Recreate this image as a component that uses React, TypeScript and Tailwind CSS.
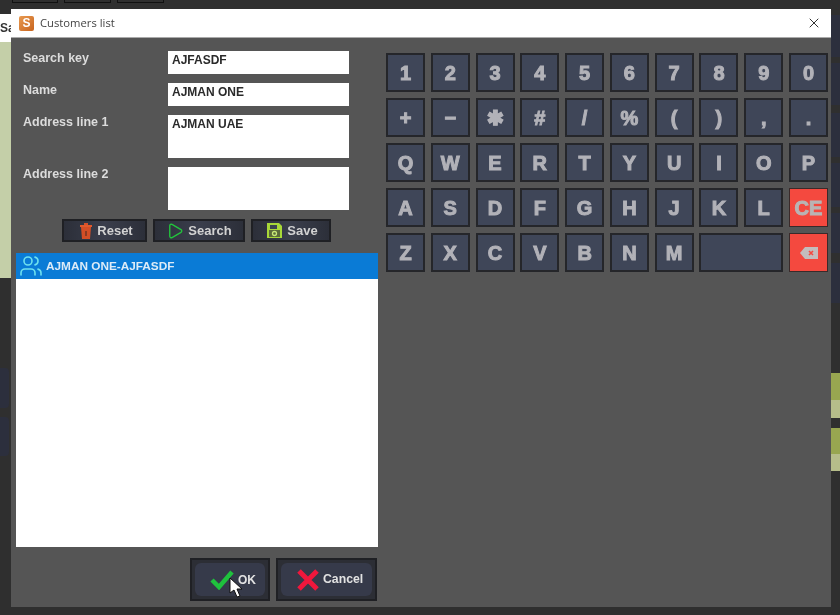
import React from 'react'
import { Play, Users, X } from 'lucide-react'

const rows = [
  ['1', '2', '3', '4', '5', '6', '7', '8', '9', '0'],
  ['+', '−', '✱', '#', '/', '%', '(', ')', ',', '.'],
  ['Q', 'W', 'E', 'R', 'T', 'Y', 'U', 'I', 'O', 'P'],
  ['A', 'S', 'D', 'F', 'G', 'H', 'J', 'K', 'L'],
]
const lastRow = ['Z', 'X', 'C', 'V', 'B', 'N', 'M']

const fields = [
  { label: 'Search key', value: 'AJFASDF', h: 'h-[23px]' },
  { label: 'Name', value: 'AJMAN ONE', h: 'h-[23px]' },
  { label: 'Address line 1', value: 'AJMAN UAE', h: 'h-[43px]' },
  { label: 'Address line 2', value: '', h: 'h-[43px]' },
]

const keyClass =
  'flex items-center justify-center h-[39px] border-2 border-[#25262a] bg-[#3f4658] text-[20px] font-bold text-[#b2b2b8] [-webkit-text-stroke:1px_#b2b2b8]'
const redKeyClass =
  'flex items-center justify-center h-[39px] border border-[#3a2a2a] bg-[#f4493f] text-[20px] font-bold text-[#b9b4b4] [-webkit-text-stroke:1px_#b9b4b4]'
const smallBtn =
  'flex items-center justify-center gap-[4px] h-[23px] border-2 border-[#1f2024] bg-gradient-to-r from-[#2c2f39] via-[#3a3e4c] to-[#2c2f39] text-[13px] font-bold text-[#d2d2d2]'
const bigBtn = 'flex h-[43px] p-[3px] border-2 border-[#1f2024] bg-[#2c2e35]'
const bigBtnInner =
  'flex flex-1 items-center justify-start rounded-md bg-[#363a4a] font-bold text-[#e2e2e2]'

function TrashIcon() {
  return (
    <svg width="14" height="18" viewBox="0 0 14 18">
      <path d="M5 1h4v2H5z" fill="#d8512a" />
      <path d="M1 3h12v2H1z" fill="#e25a2c" />
      <path d="M2 5h10l-1 12H3z" fill="#d44e26" />
      <path d="M6 9h2v5H6z" fill="#8c3a22" />
    </svg>
  )
}

function SaveIcon() {
  return (
    <svg width="17" height="17" viewBox="0 0 17 17">
      <path d="M1 1h12l3 3v12H1z" fill="#a8d838" />
      <path d="M4 3h7v4H4z" fill="#3c4450" />
      <path d="M3 8h11v7H3z" fill="#5c6a3a" />
      <circle cx="8.5" cy="11.5" r="2" fill="none" stroke="#c8e878" strokeWidth="1.3" />
    </svg>
  )
}

function BackspaceIcon() {
  return (
    <svg width="20" height="14" viewBox="0 0 20 14">
      <path d="M6 1h13v12H6L1 7z" fill="#c4bcbc" />
      <path d="M10 5l4 4M14 5l-4 4" stroke="#f4493f" strokeWidth="1.6" />
    </svg>
  )
}

function CheckIcon() {
  return (
    <svg width="24" height="21" viewBox="0 0 24 21">
      <path d="M2 11l7 7L22 3" fill="none" stroke="#1fc13d" strokeWidth="4.5" />
    </svg>
  )
}

function CrossIcon() {
  return (
    <svg width="24" height="24" viewBox="0 0 24 24">
      <path d="M3 3l18 18M21 3L3 21" fill="none" stroke="#f0173c" strokeWidth="5" />
    </svg>
  )
}

function Cursor() {
  return (
    <svg className="absolute left-[37px] top-[17px]" width="13" height="21" viewBox="0 0 13 21">
      <path d="M1 1v15l4-3 3 7 3-1-3-7h5z" fill="#fff" stroke="#111" strokeWidth="1" />
    </svg>
  )
}

export default function App() {
  return (
    <div className="flex flex-col w-[840px] h-[615px] overflow-hidden bg-[#2f2f2f] font-['Liberation_Sans',sans-serif] blur-[0.4px]">
      {/* toolbar of the window behind the dialog */}
      <div className="flex gap-[6px] h-[9px] pl-[12px] shrink-0">
        <div className="w-[46px] h-[3px] border-b border-x border-[#111]" />
        <div className="w-[47px] h-[3px] border-b border-x border-[#111]" />
        <div className="w-[47px] h-[3px] border-b border-x border-[#111]" />
      </div>

      <div className="flex flex-1">
        {/* left edge of the window behind */}
        <div className="flex flex-col w-[11px] shrink-0">
          <div className="h-[5px]" />
          <div className="flex items-center h-[28px] bg-white text-[12px] font-bold text-[#333] overflow-hidden">Sa</div>
          <div className="h-[236px] bg-[#c4cfa8]" />
          <div className="h-[90px]" />
          <div className="h-[40px] w-[9px] rounded-r bg-[#2c2f3d]" />
          <div className="h-[9px]" />
          <div className="h-[39px] w-[9px] rounded-r bg-[#2c2f3d]" />
        </div>

        {/* dialog */}
        <div className="flex flex-col w-[820px] h-[598px] shrink-0 bg-[#555555]">
          <div className="flex items-center justify-between h-[29px] pl-[8px] pr-[9px] bg-white border-b border-[#aaa]">
            <div className="flex items-center gap-[6px]">
              <div className="flex items-center justify-center w-[15px] h-[15px] rounded-[2px] bg-gradient-to-br from-[#e89a50] to-[#c8641c] text-[12px] font-bold text-white">S</div>
              <span className="font-['Open_Sans',sans-serif] text-[11.25px] text-[#444]">Customers list</span>
            </div>
            <X size={16} strokeWidth={1.4} className="text-[#222]" />
          </div>

          <div className="flex flex-1 gap-[8px] pl-[5px]">
            {/* form and list */}
            <div className="flex flex-col w-[362px] pt-[13px]">
              <div className="grid grid-cols-[145px_181px] gap-y-[9px] pl-[7px]">
                {fields.map(f => (
                  <React.Fragment key={f.label}>
                    <div className="text-[12.5px] leading-[14px] font-bold text-[#dcdcdc]">{f.label}</div>
                    <div className={`${f.h} px-[4px] pt-[2px] bg-white text-[12px] leading-[14px] font-bold text-[#2a2a2a]`}>{f.value}</div>
                  </React.Fragment>
                ))}
              </div>

              <div className="flex gap-[6px] mt-[9px] pl-[46px]">
                <div className={`${smallBtn} w-[85px] pl-[3px]`}><TrashIcon />Reset</div>
                <div className={`${smallBtn} w-[92px]`}><Play size={18} strokeWidth={1.8} className="text-[#22c43c]" />Search</div>
                <div className={`${smallBtn} w-[80px] pl-[2px]`}><SaveIcon />Save</div>
              </div>

              <div className="flex flex-col h-[294px] mt-[11px] bg-white">
                <div className="flex items-center gap-[3px] h-[26px] pl-[3px] bg-[#0a7bd6] text-[11.8px] font-bold text-[#dcebf7]">
                  <Users size={24} strokeWidth={1.6} className="text-[#6fe0ee]" />
                  <span className="mt-[2px]">AJMAN ONE-AJFASDF</span>
                </div>
              </div>

              <div className="flex justify-end gap-[6px] mt-[11px] pr-[1px]">
                <div className={`${bigBtn} relative w-[80px]`}>
                  <div className={`${bigBtnInner} gap-[4px] pl-[15px] text-[12px]`}><CheckIcon />OK</div>
                  <Cursor />
                </div>
                <div className={`${bigBtn} w-[101px]`}>
                  <div className={`${bigBtnInner} gap-[3px] pl-[15px] text-[12.25px]`}><CrossIcon />Cancel</div>
                </div>
              </div>
            </div>

            {/* on-screen keyboard */}
            <div className="grid grid-cols-10 gap-x-[5.8px] gap-y-[6px] w-[442px] h-fit pt-[15px]">
              {rows.map(row =>
                row.map(k => (
                  <div key={k} className={keyClass}>{k}</div>
                ))
              )}
              <div className={redKeyClass}>CE</div>
              {lastRow.map(k => (
                <div key={k} className={keyClass}>{k}</div>
              ))}
              <div className={`${keyClass} col-span-2`} />
              <div className={redKeyClass}><BackspaceIcon /></div>
            </div>
          </div>
        </div>

        {/* right edge of the window behind */}
        <div className="flex flex-col gap-[6px] w-[9px] shrink-0 pt-[6px]">
          <div className="h-[42px] bg-[#2c2f3d]" />
          <div className="h-[42px] bg-[#2c2f3d]" />
          <div className="h-[44px] mt-[2px] bg-[#2c2f3d]" />
          <div className="h-[44px] bg-[#2c2f3d]" />
          <div className="h-[40px] bg-[#2c2f3d]" />
          <div className="h-[40px] mt-[4px] bg-[#2c2f3d]" />
          <div className="h-[45px] mt-[64px] bg-gradient-to-b from-[#98a650] from-60% to-[#b6bd8a] to-60%" />
          <div className="h-[43px] mt-[4px] bg-gradient-to-b from-[#98a650] from-60% to-[#b6bd8a] to-60%" />
        </div>
      </div>
    </div>
  )
}
